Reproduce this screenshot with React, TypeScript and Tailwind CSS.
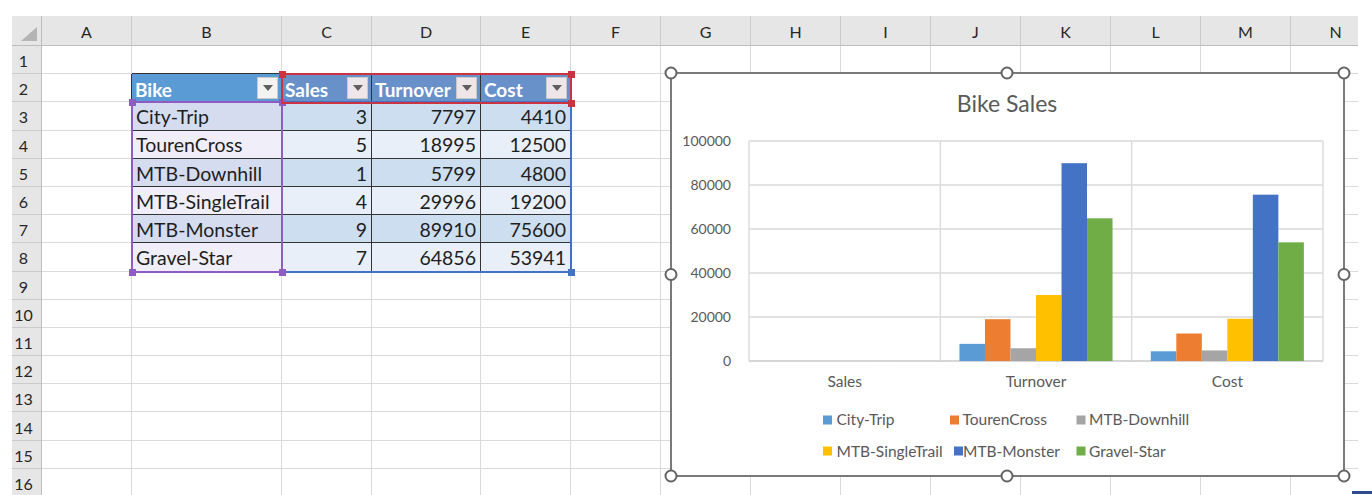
import React from 'react';

type Col = { k: string; w: string };

const COLS: Col[] = [
  { k: 'A', w: 'w-[90px]' },
  { k: 'B', w: 'w-[150px]' },
  { k: 'C', w: 'w-[90px]' },
  { k: 'D', w: 'w-[109px]' },
  { k: 'E', w: 'w-[90px]' },
  { k: 'F', w: 'w-[90px]' },
  { k: 'G', w: 'w-[90px]' },
  { k: 'H', w: 'w-[90px]' },
  { k: 'I', w: 'w-[90px]' },
  { k: 'J', w: 'w-[90px]' },
  { k: 'K', w: 'w-[90px]' },
  { k: 'L', w: 'w-[90px]' },
  { k: 'M', w: 'w-[90px]' },
  { k: 'N', w: 'w-[90px]' },
];

const HEAD = ['Bike', 'Sales', 'Turnover', 'Cost'];

const BIKES: [string, number, number, number][] = [
  ['City-Trip', 3, 7797, 4410],
  ['TourenCross', 5, 18995, 12500],
  ['MTB-Downhill', 1, 5799, 4800],
  ['MTB-SingleTrail', 4, 29996, 19200],
  ['MTB-Monster', 9, 89910, 75600],
  ['Gravel-Star', 7, 64856, 53941],
];

const COLORS = ['#5b9bd5', '#ed7d31', '#a5a5a5', '#ffc000', '#4472c4', '#70ad47'];

const FilterBtn = ({ tint }: { tint: boolean }) => (
  <div
    className={`absolute right-[3px] top-[3px] w-[21px] h-[22px] border border-[#c9c9c9] flex items-center justify-center ${
      tint ? 'bg-[#eee6e9]' : 'bg-[#f3f3f3]'
    }`}
  >
    <svg width="10" height="6" viewBox="0 0 10 6">
      <path d="M0 0 L10 0 L5 6 Z" fill="#5f5f5f" />
    </svg>
  </div>
);

function Cell({ r, c, col }: { r: number; c: number; col: Col }) {
  let cls = 'border-r-[#dadada] border-b-[#dadada]';
  let content: React.ReactNode = null;
  let align = 'justify-start';
  const inTable = c >= 1 && c <= 4;

  if (r === 1 && inTable) cls = 'border-r-[#dadada] border-b-[#333333]';
  if (r === 2 && c === 0) cls = 'border-r-[#333333] border-b-[#dadada]';

  if (r === 2 && inTable) {
    const bg = c === 1 ? 'bg-[#5b9bd5]' : 'bg-[#6891c9]';
    cls = `${bg} ${c === 2 || c === 3 ? 'border-r-[#333333]' : 'border-r-[#dadada]'} border-b-[#dadada] relative`;
    content = (
      <>
        <span className="pl-[3px] font-bold text-white text-[19px]">{HEAD[c - 1]}</span>
        <FilterBtn tint={c > 1} />
      </>
    );
  }

  if (r >= 3 && r <= 8 && inTable) {
    const odd = r % 2 === 1;
    const bg =
      c === 1 ? (odd ? 'bg-[#d6dcf0]' : 'bg-[#f0eef8]') : odd ? 'bg-[#cddef1]' : 'bg-[#e8eff8]';
    const bb = r <= 7 ? 'border-b-[#333333]' : 'border-b-[#dadada]';
    const br = c === 2 || c === 3 ? 'border-r-[#333333]' : 'border-r-[#dadada]';
    cls = `${bg} ${bb} ${br}`;
    const row = BIKES[r - 3];
    if (c === 1) {
      content = <span className="pl-[4px] text-[#1e1e1e]">{row[0]}</span>;
    } else {
      align = 'justify-end';
      content = <span className="pr-[4px] text-[#1e1e1e]">{row[c - 1]}</span>;
    }
  }

  return (
    <div
      className={`${col.w} shrink-0 h-full border-r border-b ${cls} flex items-end ${align} pb-[1px] overflow-visible whitespace-nowrap text-[19.5px] leading-[1.15]`}
    >
      {content}
    </div>
  );
}

// chart-source range: coloured frame with square grips on chosen corners
const Range = ({ box, line, fill, grips }: { box: string; line: string; fill: string; grips: string[] }) => (
  <div className={`absolute border-2 ${box} ${line}`}>
    {grips.map((g) => (
      <div key={g} className={`absolute w-[7px] h-[7px] ${g} ${fill}`} />
    ))}
  </div>
);

function Chart() {
  const PL = 79;
  const PT = 69;
  const PR = 653;
  const PB = 289;
  const cw = (PR - PL) / 3;
  const bw = cw / 7.5;
  const cats = ['Sales', 'Turnover', 'Cost'];
  const textFill = '#595959';
  const legend = [
    { x: 153, tx: 166.5, row: 0 },
    { x: 280, tx: 292.5, row: 0 },
    { x: 406.5, tx: 419, row: 0 },
    { x: 153, tx: 166.5, row: 1 },
    { x: 284, tx: 293, row: 1 },
    { x: 406.5, tx: 419, row: 1 },
  ];
  const handles = [
    [1, 1],
    [337, 1],
    [674, 1],
    [1, 202.5],
    [674, 202.5],
    [1, 404],
    [337, 404],
    [674, 404],
  ];

  return (
    <div className="absolute left-[670px] top-[72px] w-[675px] h-[405px]">
      <svg width="675" height="405" viewBox="0 0 675 405" className="overflow-visible" fontFamily="Lato, 'Liberation Sans', sans-serif">
        <rect x="1" y="1" width="673" height="403" fill="#ffffff" stroke="#7a7a7a" strokeWidth="2" />
        <text x="337" y="40" textAnchor="middle" fontSize="23" fill={textFill}>
          Bike Sales
        </text>

        {[0, 1, 2, 3, 4, 5].map((i) => {
          const y = PB - i * 44;
          return (
            <g key={i}>
              <line x1={PL} x2={PR} y1={y} y2={y} stroke={i === 0 ? '#c9c9c9' : '#d9d9d9'} strokeWidth="1.3" />
              <text x="61" y={y + 5} textAnchor="end" fontSize="14" fill={textFill}>
                {i * 20000}
              </text>
            </g>
          );
        })}
        {[0, 1, 2, 3].map((i) => (
          <line key={i} x1={PL + i * cw} x2={PL + i * cw} y1={PT} y2={PB} stroke="#d9d9d9" strokeWidth="1.3" />
        ))}

        {BIKES.map((b, si) =>
          [b[1], b[2], b[3]].map((v, ci) => {
            const h = (v / 100000) * 220;
            return (
              <rect
                key={`${si}-${ci}`}
                x={PL + ci * cw + 0.75 * bw + si * bw}
                y={PB - h}
                width={bw}
                height={h}
                fill={COLORS[si]}
              />
            );
          }),
        )}

        {cats.map((c, i) => (
          <text key={c} x={PL + i * cw + cw / 2} y="315" textAnchor="middle" fontSize="15.5" fill={textFill}>
            {c}
          </text>
        ))}

        {legend.map((l, i) => {
          const sy = l.row === 0 ? 343.5 : 374.5;
          const ty = l.row === 0 ? 353 : 385;
          return (
            <g key={i}>
              <rect x={l.x} y={sy} width="9" height="9" fill={COLORS[i]} />
              <text x={l.tx} y={ty} fontSize="15.5" fill={textFill}>
                {BIKES[i][0]}
              </text>
            </g>
          );
        })}

        {handles.map(([x, y], i) => (
          <circle key={i} cx={x} cy={y} r="5.5" fill="#ffffff" stroke="#646464" strokeWidth="2" />
        ))}
      </svg>
    </div>
  );
}

export default function App() {
  const rows = Array.from({ length: 16 }, (_, i) => i + 1);

  return (
    <div className="relative w-[1372px] h-[495px] overflow-hidden bg-white font-['Lato','Liberation_Sans',sans-serif]">
      <div className="pt-[16px] pl-[12px]">
        <div className="w-[1346px] overflow-hidden">
          {/* column headers */}
          <div className="flex h-[30px]">
            <div className="relative w-[30px] shrink-0 h-full bg-[#e6e6e6] border-r border-b border-[#bdbdbd]">
              <svg className="absolute right-[4px] bottom-[4px]" width="16" height="14" viewBox="0 0 16 14">
                <path d="M16 0 L16 14 L0 14 Z" fill="#b4b4b4" />
              </svg>
            </div>
            {COLS.map((c) => (
              <div
                key={c.k}
                className={`${c.w} shrink-0 h-full bg-[#e6e6e6] border-r border-r-[#cbcbcb] border-b border-b-[#bdbdbd] flex items-center justify-center pt-[3px] text-[16px] text-[#262626]`}
              >
                {c.k}
              </div>
            ))}
          </div>

          {rows.map((r) => (
            <div key={r} className="flex h-[28.2px]">
              <div className="w-[30px] shrink-0 h-full bg-[#e6e6e6] border-r border-r-[#bdbdbd] border-b border-b-[#cbcbcb] flex items-center justify-center pr-[6px] pt-[3px] text-[16px] text-[#262626]">
                {r}
              </div>
              {COLS.map((col, c) => (
                <Cell key={col.k} r={r} c={c} col={col} />
              ))}
            </div>
          ))}
        </div>
      </div>

      <Range
        box="left-[281px] top-[101px] w-[291px] h-[172px]"
        line="border-[#4472c4]"
        fill="bg-[#4472c4]"
        grips={['right-[-4.5px] bottom-[-4.5px]']}
      />
      <Range
        box="left-[131px] top-[101px] w-[152px] h-[172px]"
        line="border-[#8e5cc2]"
        fill="bg-[#8e5cc2]"
        grips={['left-[-4.5px] top-[-4.5px]', 'right-[-4.5px] top-[-4.5px]', 'left-[-4.5px] bottom-[-4.5px]', 'right-[-4.5px] bottom-[-4.5px]']}
      />
      <Range
        box="left-[281px] top-[73px] w-[291px] h-[31px]"
        line="border-[#cc3340]"
        fill="bg-[#cc3340]"
        grips={['left-[-4.5px] top-[-4.5px]', 'right-[-4.5px] top-[-4.5px]', 'right-[-4.5px] bottom-[-4.5px]']}
      />

      <Chart />

      <div className="absolute left-[1352px] top-[491px] w-[20px] h-[3px] bg-[#2e4b8f]" />
    </div>
  );
}
